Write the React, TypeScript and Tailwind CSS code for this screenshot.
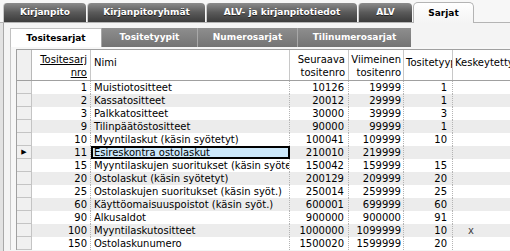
import React from 'react';

type Row = [string, string, string, string, string, string];

const rows: Row[] = [
  ['1', 'Muistiotositteet', '10126', '19999', '1', ''],
  ['2', 'Kassatositteet', '20012', '29999', '1', ''],
  ['3', 'Palkkatositteet', '30000', '39999', '3', ''],
  ['9', 'Tilinpäätöstositteet', '90000', '99999', '1', ''],
  ['10', 'Myyntilaskut (käsin syötetyt)', '100041', '109999', '10', ''],
  ['11', 'Esireskontra ostolaskut', '210010', '219999', '', ''],
  ['15', 'Myyntilaskujen suoritukset (käsin syötetyt)', '150042', '159999', '15', ''],
  ['20', 'Ostolaskut (käsin syötetyt)', '200129', '209999', '20', ''],
  ['25', 'Ostolaskujen suoritukset (käsin syöt.)', '250014', '259999', '25', ''],
  ['60', 'Käyttöomaisuuspoistot (käsin syöt.)', '600001', '699999', '60', ''],
  ['90', 'Alkusaldot', '900000', '900000', '91', ''],
  ['100', 'Myyntilaskutositteet', '1000000', '1099999', '10', 'x'],
  ['150', 'Ostolaskunumero', '1500020', '1599999', '20', ''],
];

const topTabs = [
  { label: 'Kirjanpito', w: 'w-[83px]' },
  { label: 'Kirjanpitoryhmät', w: 'w-[118px]' },
  { label: 'ALV- ja kirjanpitotiedot', w: 'w-[151px]' },
  { label: 'ALV', w: 'w-[54px]' },
];

const subTabs = [
  { label: 'Tositetyypit', w: 'w-[96px]' },
  { label: 'Numerosarjat', w: 'w-[100px]' },
  { label: 'Tilinumerosarjat', w: 'w-[114px]' },
];

export default function App() {
  return (
    <div className="w-[510px] h-[251px] overflow-hidden bg-[#f4f4f4] font-['DejaVu_Sans',sans-serif] text-black">
      {/* main tabs */}
      <div className="flex items-end h-[22px] pl-[3px] bg-[#f7f7f7]">
        {topTabs.map(t => (
          <div
            key={t.label}
            className={`${t.w} h-[19px] mr-[1px] rounded-t-[4px] border-l border-[#c8c8c8] bg-gradient-to-b from-[#8c8c8c] via-[#5a5a5a] to-[#3c3c3c] flex items-center justify-center text-white font-bold text-[9px] leading-none [text-shadow:0_1px_0_#222]`}
          >
            {t.label}
          </div>
        ))}
        <div className="w-[61px] h-[21px] -mb-[1px] rounded-t-[5px] border border-b-0 border-[#b4b4b4] bg-gradient-to-b from-white to-[#f4f4f4] flex items-center justify-center font-bold text-[9px] leading-none">
          Sarjat
        </div>
      </div>

      {/* panel */}
      <div className="flex h-[229px] border-t border-[#b4b4b4] bg-[#e2e2e2]">
        <div className="ml-[3px] flex-1 border-l border-[#a8a8a8] bg-[#f4f4f4] pt-[5px]">
          {/* sub tabs */}
          <div className="flex ml-[6px] h-[19px]">
            <div className="w-[91px] h-[19px] border-l border-t border-[#c0c0c0] bg-white flex items-center justify-center font-bold text-[9px] leading-none">
              Tositesarjat
            </div>
            {subTabs.map(t => (
              <div
                key={t.label}
                className={`${t.w} h-[19px] border-l border-[#a8a8a8] bg-gradient-to-b from-[#8e8e8e] to-[#747474] flex items-center justify-center text-white font-bold text-[9px] leading-none`}
              >
                {t.label}
              </div>
            ))}
          </div>

          {/* grid */}
          <div className="ml-[6px] border-l border-[#c8c8c8] bg-[#f7f7f7] pt-[2px] pl-[5px]">
            <div className="border-l border-t border-[#a0a0a0] text-[10px] leading-[13px]">
              {/* header */}
              <div className="flex h-[31px] bg-white border-b border-[#a0a0a0]">
                <div className="w-[15px] shrink-0 bg-[#f0f0f0] border-r border-[#b8b8b8]" />
                <div className="w-[59px] shrink-0 border-r border-[#c8c8c8] flex flex-col justify-end items-end pr-[3px] pb-[1px] underline">
                  <span>Tositesarj</span>
                  <span>nro</span>
                </div>
                <div className="w-[199px] shrink-0 border-r border-[#c8c8c8] pl-[3px] pt-[6px]">Nimi</div>
                <div className="w-[59px] shrink-0 border-r border-[#c8c8c8] flex flex-col justify-end items-end pr-[3px] pb-[1px]">
                  <span>Seuraava</span>
                  <span>tositenro</span>
                </div>
                <div className="w-[55px] shrink-0 border-r border-[#c8c8c8] flex flex-col justify-end items-end pr-[2px] pb-[1px]">
                  <span>Viimeinen</span>
                  <span>tositenro</span>
                </div>
                <div className="w-[49px] shrink-0 border-r border-[#c8c8c8] pl-[2px] pt-[6px] overflow-hidden whitespace-nowrap">Tositetyyppi</div>
                <div className="w-[80px] shrink-0 pl-[2px] pt-[6px] overflow-hidden whitespace-nowrap">Keskeytetty</div>
              </div>

              {/* rows */}
              {rows.map((r, i) => {
                const selected = r[0] === '11';
                const bg = i % 2 === 1 ? 'bg-[#ececec]' : 'bg-white';
                return (
                  <div key={r[0]} className={`flex h-[13px] ${bg}`}>
                    <div className="w-[15px] shrink-0 bg-[#f0f0f0] border-r border-b border-[#c4c4c4] flex items-center justify-center">
                      {selected && <span className="text-[7px] leading-none">▶</span>}
                    </div>
                    <div className="w-[59px] shrink-0 border-r border-dotted border-[#b4b4b4] text-right pr-[3px]">{r[0]}</div>
                    <div
                      className={`w-[199px] shrink-0 overflow-hidden whitespace-nowrap ${
                        selected ? 'bg-[#cce8fa] border-2 border-black pl-[1px] leading-[9px]' : 'border-r border-dotted border-[#b4b4b4] pl-[3px]'
                      }`}
                    >
                      {r[1]}
                    </div>
                    <div className="w-[59px] shrink-0 border-r border-dotted border-[#b4b4b4] text-right pr-[4px]">{r[2]}</div>
                    <div className="w-[55px] shrink-0 border-r border-dotted border-[#b4b4b4] text-right pr-[2px]">{r[3]}</div>
                    <div className="w-[49px] shrink-0 border-r border-dotted border-[#b4b4b4] text-right pr-[5px]">{r[4]}</div>
                    <div className="w-[80px] shrink-0 pl-[15px] text-[#444]">{r[5]}</div>
                  </div>
                );
              })}
            </div>
          </div>
        </div>
      </div>
    </div>
  );
}
